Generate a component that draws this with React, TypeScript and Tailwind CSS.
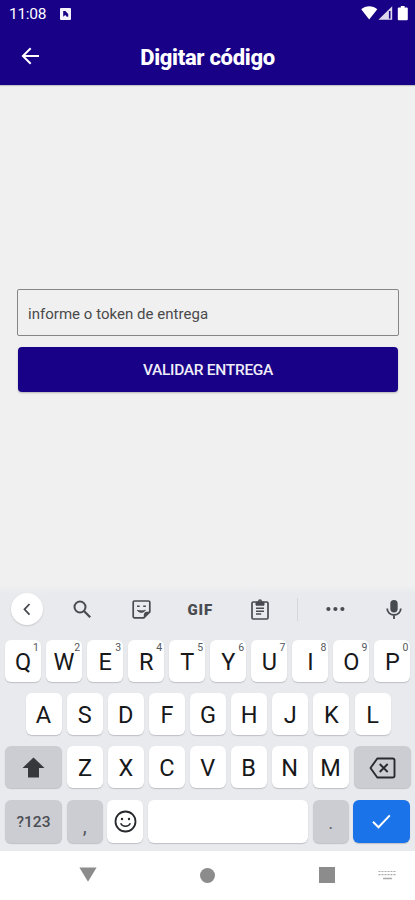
import React from 'react';

const keyBase =
  'relative flex h-[42px] items-center justify-center rounded-[6px] bg-white shadow-[0_1px_1px_rgba(60,64,72,0.24)]';

function Key({ label, hint }: { label: string; hint?: string }) {
  return (
    <div className={keyBase + ' w-[36px] shrink-0 text-[23.5px] leading-none text-[#17181a]'}>
      <span className="relative top-[2px]">{label}</span>
      {hint && <span className="absolute right-[2px] top-[3px] text-[10.5px] leading-none text-[#55585c]">{hint}</span>}
    </div>
  );
}

function StatusBar() {
  return (
    <div className="flex h-7 items-center pl-[9px] pr-[6px] text-white">
      <span className="relative top-px w-[38px] text-[15.5px] leading-none tracking-[-0.3px]">11:08</span>
      <svg className="ml-[13px]" width="11" height="12" viewBox="0 0 11 12">
        <rect width="11" height="12" rx="1" fill="#f4f2fc" />
        <path d="M3.2 8.8V3h2.2l2.8 3v2.8H6.8L5.3 7.1z" fill="#180087" />
      </svg>
      <svg className="ml-auto" width="48" height="16" viewBox="0 0 48 16" fill="#fff">
        <path d="M.2 3.2C4.5-.8 12-.8 16.3 3.2L8.2 13.6z" />
        <path d="M31.2.2V13.8H17.4z" opacity=".85" />
        <path d="M27.9 5h1.6v7.6h-1.6z" fill="#180087" />
        <path d="M39.8 0h3.8v1.4h2.3c.5 0 .9.4.9.9v11c0 .5-.4.9-.9.9h-8.2a.9.9 0 0 1-.9-.9v-11c0-.5.4-.9.9-.9h2.1z" />
      </svg>
    </div>
  );
}

function Toolbar() {
  return (
    <div className="flex h-[48px] items-center text-[#484b50]">
      <div className="ml-[11px] flex size-8 items-center justify-center rounded-full bg-white shadow-[0_1px_2px_rgba(0,0,0,0.15)]">
        <svg width="8" height="13" viewBox="0 0 8 13" fill="none" stroke="currentColor" strokeWidth="1.8">
          <path d="M6.5 1 1.5 6.3l5 5.3" />
        </svg>
      </div>
      <svg className="ml-[30px]" width="19" height="19" viewBox="0 0 19 19" fill="none" stroke="currentColor" strokeWidth="2">
        <circle cx="7" cy="7" r="5.5" />
        <path d="m11.2 11.2 6 6" strokeWidth="2.3" />
      </svg>
      <svg className="ml-[40px]" width="19" height="19" viewBox="0 0 19 19" fill="none" stroke="currentColor" strokeWidth="1.7">
        <path d="M2.5 1h14c.8 0 1.3.6 1.3 1.3v9.5l-6 6H2.5c-.8 0-1.3-.6-1.3-1.3V2.3C1.2 1.6 1.7 1 2.5 1z" />
        <path d="M17.8 11.8 11.8 17.8v-2.7c0-2 1-3.3 3-3.3z" fill="currentColor" stroke="none" />
        <path d="M5.3 10.3c1.8 2.8 6.3 2.8 8-.1-2.5.7-5.3.8-8 .1z" fill="currentColor" strokeWidth=".8" />
        <path d="M5 6.3h2.7M11.2 6.3h2.7" strokeWidth="1.6" />
      </svg>
      <span className="relative top-px ml-[36.5px] w-[27px] text-[15px] font-black leading-none tracking-[0.9px]">GIF</span>
      <svg className="ml-[36.5px]" width="18" height="21" viewBox="0 0 18 21" fill="none" stroke="currentColor" strokeWidth="1.7">
        <rect x="1" y="3" width="16" height="17" rx="1.3" />
        <path d="M5 3.2h8v3H5z" fill="currentColor" strokeWidth="1" />
        <circle cx="9" cy="2.4" r="1.4" strokeWidth="1.3" />
        <path d="M5 9.3h8M5 12.2h8M5 15.1h5.2" strokeWidth="1.5" />
      </svg>
      <div className="ml-[28px] h-[23px] w-px bg-[#d4d7db]" />
      <svg className="ml-[27.5px]" width="19" height="6" viewBox="0 0 19 6" fill="currentColor">
        <circle cx="2.4" cy="3" r="2.1" />
        <circle cx="9.4" cy="3" r="2.1" />
        <circle cx="16.4" cy="3" r="2.1" />
      </svg>
      <svg className="ml-[41px]" width="16" height="21" viewBox="0 0 16 21">
        <rect x="4.3" y="1" width="7.4" height="12.5" rx="3.7" fill="currentColor" />
        <path d="M1.2 9.5C1.2 13.3 4.2 16 8 16s6.8-2.7 6.8-6.5M8 16v4" fill="none" stroke="currentColor" strokeWidth="1.8" />
      </svg>
    </div>
  );
}

function Keyboard() {
  return (
    <div className="h-[266px] bg-linear-to-b from-[#f0f0f1] to-[#e8eaed] to-[9px]">
      <Toolbar />
      <div className="mt-[6.5px] flex justify-between pl-[5px] pr-[4.5px]">
        {'QWERTYUIOP'.split('').map((letter, i) => (
          <Key key={letter} label={letter} hint={String((i + 1) % 10)} />
        ))}
      </div>
      <div className="mt-[11.5px] flex justify-between pl-[25.5px] pr-[24.5px]">
        {'ASDFGHJKL'.split('').map((letter) => (
          <Key key={letter} label={letter} />
        ))}
      </div>
      <div className="mt-[11px] flex justify-between pl-[5px] pr-[4.5px]">
        <div className={keyBase + ' w-[57px] !bg-[#cbcdd2]'}>
          <svg width="23" height="21" viewBox="0 0 23 21" fill="#36383c">
            <path d="M11.5.5 22.5 11H17v9.5H6V11H.5z" />
          </svg>
        </div>
        {'ZXCVBNM'.split('').map((letter) => (
          <Key key={letter} label={letter} />
        ))}
        <div className={keyBase + ' w-[57px] !bg-[#cbcdd2]'}>
          <svg className="relative top-px" width="27" height="22" viewBox="0 0 27 22" fill="none" stroke="#292b30" strokeWidth="1.9">
            <path d="M8.3 1.5h15.3c1.1 0 1.9.8 1.9 1.8v15.4c0 1-.8 1.8-1.9 1.8H8.3L1.5 11z" strokeLinejoin="round" />
            <path d="m10.7 7 8 8m0-8-8 8" />
          </svg>
        </div>
      </div>
      <div className="mt-[11.5px] flex justify-between pl-[5px] pr-[4.5px]">
        <div className={keyBase + ' !h-[43px] w-[57px] !bg-[#cbcdd2] text-[15.5px] font-medium text-[#4b4e53]'}>
          <span className="relative top-[1.5px]">?123</span>
        </div>
        <div className={keyBase + ' !h-[43px] w-[36px] !bg-[#cbcdd2] text-[20px] text-[#55585d]'}>
          <span className="relative top-[5px]">,</span>
        </div>
        <div className={keyBase + ' !h-[43px] w-[36px]'}>
          <svg width="23" height="23" viewBox="0 0 23 23" fill="none" stroke="#26282b" strokeWidth="1.8">
            <circle cx="11.5" cy="11.5" r="10" />
            <path d="M6.7 13.3c1.6 4 8 4 9.6 0" strokeWidth="1.5" />
            <circle cx="8" cy="9" r="1.2" fill="#26282b" stroke="none" />
            <circle cx="15" cy="9" r="1.2" fill="#26282b" stroke="none" />
          </svg>
        </div>
        <div className={keyBase + ' !h-[43px] w-[160px]'} />
        <div className={keyBase + ' !h-[43px] w-[36px] !bg-[#cbcdd2] text-[19px] text-[#66696e]'}>
          <span className="relative top-[2px]">.</span>
        </div>
        <div className={keyBase + ' !h-[43px] w-[57px] !bg-[#1a73e8]'}>
          <svg width="19" height="15" viewBox="0 0 19 15" fill="none" stroke="#fff" strokeWidth="2">
            <path d="m1 7.7 5.5 5.5L17.8 1.4" />
          </svg>
        </div>
      </div>
    </div>
  );
}

function NavigationBar() {
  return (
    <div className="flex h-[49px] items-start bg-white text-[#8c8c8c]">
      <svg className="ml-[79px] mt-[15.5px]" width="18" height="15" viewBox="0 0 18 15" fill="currentColor">
        <path d="M.4.5h17.2L9 14.8z" />
      </svg>
      <div className="ml-[103px] mt-[16.5px] size-[15px] rounded-full bg-[#8c8c8c]" />
      <div className="ml-[104px] mt-[16px] size-4 bg-[#8c8c8c]" />
      <svg className="ml-[43px] mt-[19px]" width="19" height="11" viewBox="0 0 19 11" fill="none" stroke="#aaa">
        <path d="M.5 1.5h18" strokeWidth="1.2" strokeDasharray="2 1" />
        <path d="M.5 4.7h18" strokeWidth="1.2" strokeDasharray="2 1" />
        <path d="M5 8.5h9" strokeWidth="1.5" />
      </svg>
    </div>
  );
}

export default function App() {
  return (
    <div className="flex h-[900px] w-[415px] flex-col overflow-hidden bg-[#f0f0f1] font-['Roboto',sans-serif]">
      <header className="h-[84.5px] bg-[#180087] shadow-[0_1px_1px_rgba(0,0,0,0.18)]">
        <StatusBar />
        <div className="grid h-14 grid-cols-[54px_1fr_54px] items-center text-white">
          <svg className="ml-[21px]" width="19" height="18" viewBox="0 0 19 18" fill="none" stroke="currentColor" strokeWidth="2">
            <path d="M18 9H2M9.7 1.2 1.9 9l7.8 7.8" />
          </svg>
          <h1 className="whitespace-nowrap pt-[3px] text-center text-[22px] font-extrabold leading-none tracking-[-0.3px]">Digitar código</h1>
        </div>
      </header>
      <main className="flex-1 pl-[17px] pr-[16px] pt-[204.5px]">
        <input
          className="block h-[47px] w-full rounded-[2px] border border-[#858585] bg-transparent px-[10px] pt-[2px] text-[15px] tracking-[0.03px] outline-none placeholder:text-[#4a4a4a] placeholder:opacity-100"
          placeholder="informe o token de entrega"
        />
        <button className="ml-px mt-[11px] block h-[45px] w-[380px] rounded-[4px] bg-[#180087] pt-[3px] text-[15.5px] font-medium tracking-[-0.3px] text-[#efedf8] shadow-[0_1px_2px_rgba(0,0,0,0.25)]">
          VALIDAR ENTREGA
        </button>
      </main>
      <Keyboard />
      <NavigationBar />
    </div>
  );
}
